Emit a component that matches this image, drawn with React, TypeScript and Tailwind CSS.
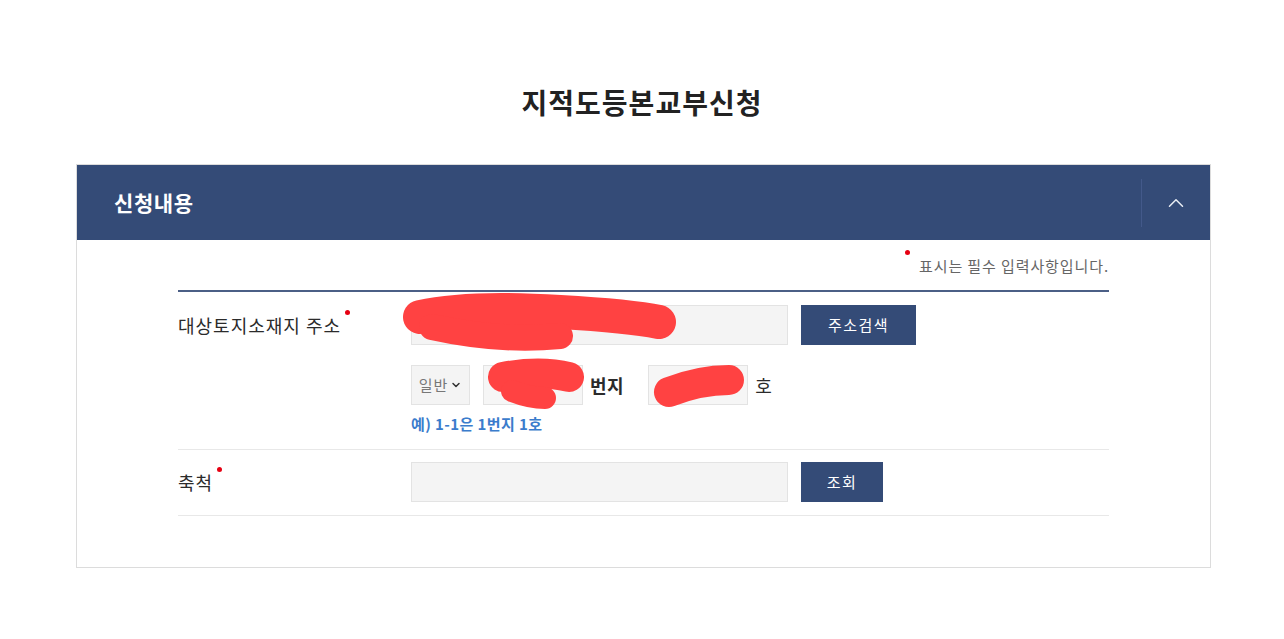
import { ChevronUp, ChevronDown } from "lucide-react";

const font = { fontFamily: '"Noto Sans CJK KR", "Noto Sans", sans-serif' };

function Req() {
  return <span className="absolute -right-[9px] -top-[2px] h-[5px] w-[5px] rounded-full bg-[#e60012]" />;
}

function Redactions() {
  // red marker scribbles painted over the screenshot
  return (
    <svg className="pointer-events-none absolute left-0 top-0" width="1284" height="639">
      <g stroke="#ff4242" strokeLinecap="round" strokeLinejoin="round" fill="none">
        <path d="M 420 317 Q 470 306 560 312 Q 630 316 659 322" strokeWidth="34" />
        <path d="M 432 327 Q 500 342 560 336" strokeWidth="26" />
        <path d="M 503 377 Q 540 370 569 377" strokeWidth="30" />
        <path d="M 512 391 Q 530 398 545 398" strokeWidth="22" />
        <path d="M 669 392 Q 700 380 729 380" strokeWidth="30" />
      </g>
    </svg>
  );
}

export default function App() {
  return (
    <div className="relative min-h-[639px] w-[1284px] bg-white" style={font}>
      <h1 className="pt-[82px] text-center text-[28px] font-bold leading-[40px] tracking-[1px] text-[#222]">
        지적도등본교부신청
      </h1>

      <section className="ml-[76px] mt-[42px] w-[1135px] border border-[#dcdcdc]">
        <header className="flex h-[75px] items-center justify-between bg-[#344b77]">
          <span className="pl-[37px] text-[21px] font-bold tracking-[0.6px] text-white">신청내용</span>
          <div className="flex h-full items-center">
            <span className="h-[48px] w-px bg-[#43598a]" />
            <span className="flex w-[68px] items-center justify-center text-[#e8ecf3]">
              <ChevronUp size={26} strokeWidth={1.4} />
            </span>
          </div>
        </header>

        <div className="px-[101px] pb-[51px] pt-[17px]">
          <p className="flex justify-end text-[15px] leading-[18px] tracking-[0.9px] text-[#666]">
            <span className="relative mr-[8px]">
              <span className="absolute -left-[6px] -top-[7px] h-[5px] w-[5px] rounded-full bg-[#e60012]" />
            </span>
            표시는 필수 입력사항입니다.
          </p>

          <div className="mt-[15px] border-t-2 border-[#4b5f86]">
            <div className="flex border-b border-[#e8e8e8] pb-[16px] pt-[13px]">
              <div className="flex h-[40px] w-[233px] items-center">
                <span className="relative text-[18px] tracking-[1px] text-[#2b2b2b]">
                  대상토지소재지 주소
                  <Req />
                </span>
              </div>
              <div className="flex flex-col">
                <div className="flex items-center gap-[13px]">
                  <input className="h-[40px] w-[377px] border border-[#e3e3e3] bg-[#f4f4f4]" />
                  <button className="h-[40px] w-[115px] bg-[#344b77] text-[15px] tracking-[1.5px] text-white">주소검색</button>
                </div>
                <div className="mt-[20px] flex items-center">
                  <div className="flex h-[40px] w-[59px] items-center justify-center gap-[2px] border border-[#e3e3e3] bg-[#f4f4f4] text-[15px] tracking-[1px] text-[#777]">
                    일반
                    <ChevronDown size={12} strokeWidth={3} className="text-[#333]" />
                  </div>
                  <input className="ml-[13px] h-[40px] w-[100px] border border-[#e3e3e3] bg-[#f6f6f6]" />
                  <span className="ml-[7px] text-[18px] font-bold tracking-[0.5px] text-[#2b2b2b]">번지</span>
                  <input className="ml-[24px] h-[40px] w-[100px] border border-[#e3e3e3] bg-[#f6f6f6]" />
                  <span className="ml-[7px] text-[18px] text-[#2b2b2b]">호</span>
                </div>
                <p className="mt-[10px] text-[15px] font-semibold leading-[18px] tracking-[0.4px] text-[#3b7ccc]">
                  예) 1-1은 1번지 1호
                </p>
              </div>
            </div>

            <div className="flex border-b border-[#e8e8e8] pb-[13px] pt-[12px]">
              <div className="flex h-[40px] w-[233px] items-center">
                <span className="relative text-[18px] tracking-[1px] text-[#2b2b2b]">
                  축척
                  <Req />
                </span>
              </div>
              <div className="flex items-center gap-[13px]">
                <input className="h-[40px] w-[377px] border border-[#e3e3e3] bg-[#f4f4f4]" />
                <button className="h-[40px] w-[82px] bg-[#344b77] text-[15px] tracking-[1.5px] text-white">조회</button>
              </div>
            </div>
          </div>
        </div>
      </section>

      <Redactions />
    </div>
  );
}
